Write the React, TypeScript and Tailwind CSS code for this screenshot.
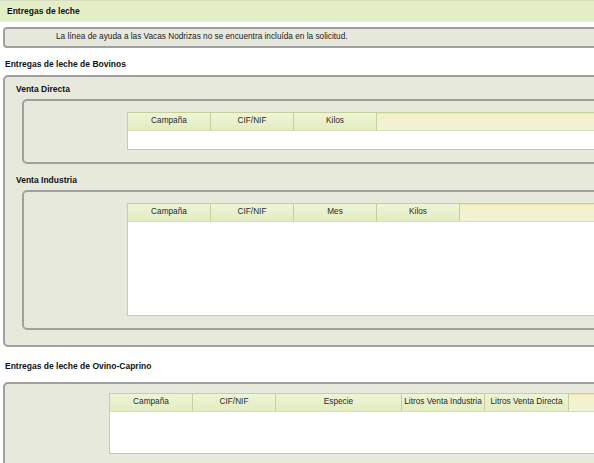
import React from 'react';

const font = "font-['Liberation_Sans',Arial,sans-serif]";

type Col = { label: string; w: string };

const DataTable = ({ cols, bodyH }: { cols: Col[]; bodyH: string }) => (
  <div className="border border-[#c6d09c] bg-white">
    <div className="flex h-[18px] border-b border-[#d6ddb8]">
      {cols.map(c => (
        <div
          key={c.label}
          className={`${c.w} shrink-0 flex items-center justify-center border-r border-[#c6d09c] bg-gradient-to-b from-[#eef5d6] to-[#e2ecc1] text-[8.25px] text-[#2a2a2a] whitespace-nowrap`}
        >
          {c.label}
        </div>
      ))}
      <div className="flex-1 bg-gradient-to-b from-[#f5f0c8] to-[#f1f3d8] border-t border-[#f0e7b0]" />
    </div>
    <div className={bodyH} />
  </div>
);

export default function App() {
  return (
    <div className={`w-[594px] h-[463px] overflow-hidden bg-white text-[#111] ${font}`}>
      <div className="w-[640px]">
        {/* Cabecera */}
        <div className="h-[22px] border-t border-[#d3dbbd] bg-[#e3eec7] pl-[7px] flex items-center text-[8.5px] font-bold">
          Entregas de leche
        </div>

        {/* Aviso */}
        <div className="mt-[5px] ml-[3px] h-[21px] border-2 border-[#a0a0a0] rounded-[4px] bg-[#e6e8dc] flex items-center pl-[51px] text-[8.25px] text-[#222]">
          La línea de ayuda a las Vacas Nodrizas no se encuentra incluída en la solicitud.
        </div>

        {/* Bovinos */}
        <div className="pt-[11px] pb-[6px] pl-[5px] leading-[10px] text-[8.5px] font-bold">
          Entregas de leche de Bovinos
        </div>
        <div className="ml-[3px] border-2 border-[#a0a0a0] rounded-[5px] bg-[#e7e9dc] pb-[15px]">
          <div className="pt-[7px] pb-[5px] pl-[11px] leading-[10px] text-[8.5px] font-bold">Venta Directa</div>
          <div className="ml-[17px] border-2 border-[#a0a0a0] rounded-[5px] pt-[11px] pb-[12px] pl-[103px]">
            <DataTable
              bodyH="h-[18px]"
              cols={[
                { label: 'Campaña', w: 'w-[83px]' },
                { label: 'CIF/NIF', w: 'w-[83px]' },
                { label: 'Kilos', w: 'w-[83px]' },
              ]}
            />
          </div>

          <div className="pt-[11px] pb-[5px] pl-[11px] leading-[10px] text-[8.5px] font-bold">Venta Industria</div>
          <div className="ml-[17px] border-2 border-[#a0a0a0] rounded-[5px] pt-[11px] pb-[12px] pl-[103px]">
            <DataTable
              bodyH="h-[93px]"
              cols={[
                { label: 'Campaña', w: 'w-[83px]' },
                { label: 'CIF/NIF', w: 'w-[83px]' },
                { label: 'Mes', w: 'w-[83px]' },
                { label: 'Kilos', w: 'w-[83px]' },
              ]}
            />
          </div>
        </div>

        {/* Ovino-Caprino */}
        <div className="pt-[14px] pb-[11px] pl-[5px] leading-[10px] text-[8.5px] font-bold">
          Entregas de leche de Ovino-Caprino
        </div>
        <div className="ml-[3px] border-2 border-[#a0a0a0] rounded-[5px] bg-[#e7e9dc] pt-[9px] pb-[12px] pl-[104px]">
          <DataTable
            bodyH="h-[41px]"
            cols={[
              { label: 'Campaña', w: 'w-[83px]' },
              { label: 'CIF/NIF', w: 'w-[83px]' },
              { label: 'Especie', w: 'w-[126px]' },
              { label: 'Litros Venta Industria', w: 'w-[83px]' },
              { label: 'Litros Venta Directa', w: 'w-[84px]' },
            ]}
          />
        </div>
      </div>
    </div>
  );
}
